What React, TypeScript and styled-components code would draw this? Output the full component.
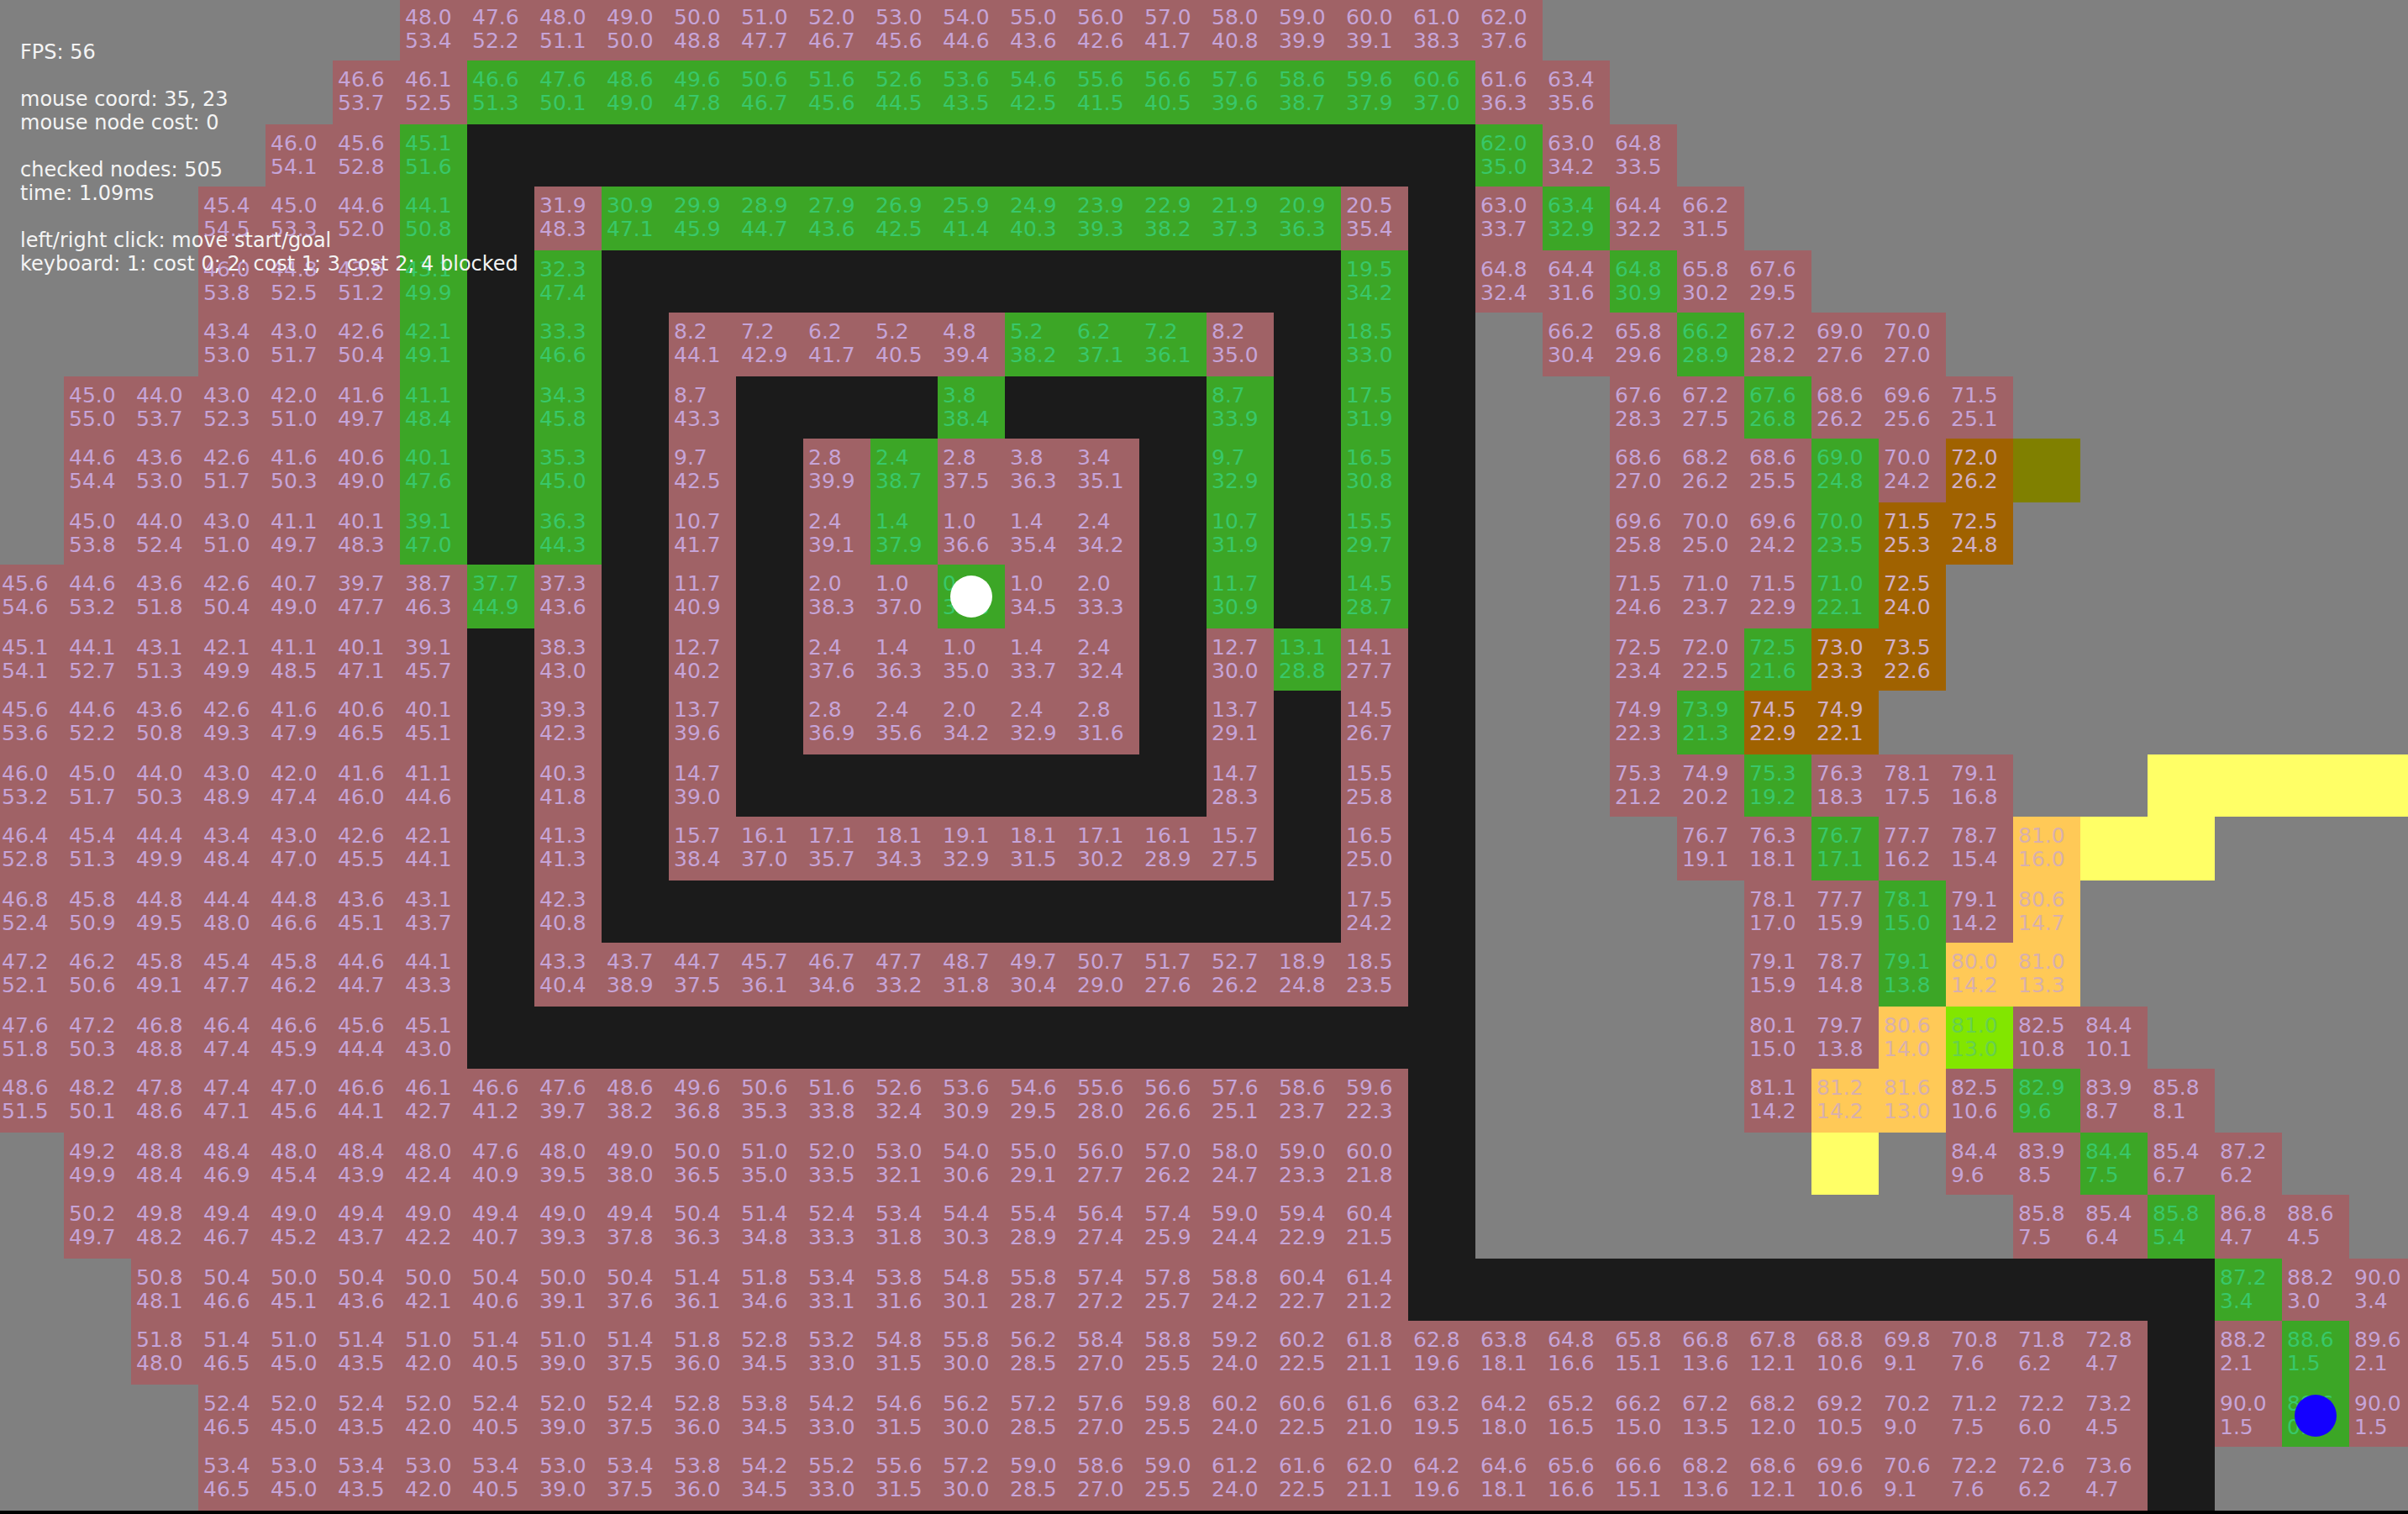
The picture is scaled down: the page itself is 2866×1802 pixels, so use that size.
import React from "react";
import styled, { createGlobalStyle } from "styled-components";

const GlobalStyle = createGlobalStyle`
  *, *::before, *::after { box-sizing: border-box; }
  body { margin: 0; background: #000; }
`;

type Kind = "empty" | "wall" | "checked" | "path" | "mud" | "amber" | "lime" | "yellow" | "olive";

const fills: Record<Kind, string> = {
  empty: "#808080",
  wall: "#1b1b1b",
  checked: "#a06266",
  path: "#3ca626",
  mud: "#a06200",
  amber: "#ffc957",
  lime: "#82e600",
  yellow: "#ffff66",
  olive: "#808000",
};

const inks: Partial<Record<Kind, string>> = {
  checked: "#c6a4d8",
  path: "#38c86a",
  mud: "#d0b0c8",
  amber: "#d8b0ac",
  lime: "#66d04e",
};

const codes: Record<string, Kind> = {
  ".": "empty",
  "#": "wall",
  p: "checked",
  g: "path",
  b: "mud",
  a: "amber",
  l: "lime",
  y: "yellow",
  o: "olive",
};

/* One line per map row. Segments are separated by "|": a code with a repeat
   count, or a code with the path costs, a slash and the heuristic costs. */
const map = [
  ". 6|p 48.0 47.6 48.0 49.0 50.0 51.0 52.0 53.0 54.0 55.0 56.0 57.0 58.0 59.0 60.0 61.0 62.0/53.4 52.2 51.1 50.0 48.8 47.7 46.7 45.6 44.6 43.6 42.6 41.7 40.8 39.9 39.1 38.3 37.6|. 13",
  ". 5|p 46.6 46.1/53.7 52.5|g 46.6 47.6 48.6 49.6 50.6 51.6 52.6 53.6 54.6 55.6 56.6 57.6 58.6 59.6 60.6/51.3 50.1 49.0 47.8 46.7 45.6 44.5 43.5 42.5 41.5 40.5 39.6 38.7 37.9 37.0|p 61.6 63.4/36.3 35.6|. 12",
  ". 4|p 46.0 45.6/54.1 52.8|g 45.1/51.6|# 15|g 62.0/35.0|p 63.0 64.8/34.2 33.5|. 11",
  ". 3|p 45.4 45.0 44.6/54.5 53.3 52.0|g 44.1/50.8|# 1|p 31.9/48.3|g 30.9 29.9 28.9 27.9 26.9 25.9 24.9 23.9 22.9 21.9 20.9/47.1 45.9 44.7 43.6 42.5 41.4 40.3 39.3 38.2 37.3 36.3|p 20.5/35.4|# 1|p 63.0/33.7|g 63.4/32.9|p 64.4 66.2/32.2 31.5|. 10",
  ". 3|p 46.0 44.8 43.6/53.8 52.5 51.2|g 43.1/49.9|# 1|g 32.3/47.4|# 11|g 19.5/34.2|# 1|p 64.8 64.4/32.4 31.6|g 64.8/30.9|p 65.8 67.6/30.2 29.5|. 9",
  ". 3|p 43.4 43.0 42.6/53.0 51.7 50.4|g 42.1/49.1|# 1|g 33.3/46.6|# 1|p 8.2 7.2 6.2 5.2 4.8/44.1 42.9 41.7 40.5 39.4|g 5.2 6.2 7.2/38.2 37.1 36.1|p 8.2/35.0|# 1|g 18.5/33.0|# 1|. 1|p 66.2 65.8/30.4 29.6|g 66.2/28.9|p 67.2 69.0 70.0/28.2 27.6 27.0|. 7",
  ". 1|p 45.0 44.0 43.0 42.0 41.6/55.0 53.7 52.3 51.0 49.7|g 41.1/48.4|# 1|g 34.3/45.8|# 1|p 8.7/43.3|# 3|g 3.8/38.4|# 3|g 8.7/33.9|# 1|g 17.5/31.9|# 1|. 2|p 67.6 67.2/28.3 27.5|g 67.6/26.8|p 68.6 69.6 71.5/26.2 25.6 25.1|. 6",
  ". 1|p 44.6 43.6 42.6 41.6 40.6/54.4 53.0 51.7 50.3 49.0|g 40.1/47.6|# 1|g 35.3/45.0|# 1|p 9.7/42.5|# 1|p 2.8/39.9|g 2.4/38.7|p 2.8 3.8 3.4/37.5 36.3 35.1|# 1|g 9.7/32.9|# 1|g 16.5/30.8|# 1|. 2|p 68.6 68.2 68.6/27.0 26.2 25.5|g 69.0/24.8|p 70.0/24.2|b 72.0/26.2|o 1|. 5",
  ". 1|p 45.0 44.0 43.0 41.1 40.1/53.8 52.4 51.0 49.7 48.3|g 39.1/47.0|# 1|g 36.3/44.3|# 1|p 10.7/41.7|# 1|p 2.4/39.1|g 1.4/37.9|p 1.0 1.4 2.4/36.6 35.4 34.2|# 1|g 10.7/31.9|# 1|g 15.5/29.7|# 1|. 2|p 69.6 70.0 69.6/25.8 25.0 24.2|g 70.0/23.5|b 71.5 72.5/25.3 24.8|. 6",
  "p 45.6 44.6 43.6 42.6 40.7 39.7 38.7/54.6 53.2 51.8 50.4 49.0 47.7 46.3|g 37.7/44.9|p 37.3/43.6|# 1|p 11.7/40.9|# 1|p 2.0 1.0/38.3 37.0|g 0.0/35.8|p 1.0 2.0/34.5 33.3|# 1|g 11.7/30.9|# 1|g 14.5/28.7|# 1|. 2|p 71.5 71.0 71.5/24.6 23.7 22.9|g 71.0/22.1|b 72.5/24.0|. 7",
  "p 45.1 44.1 43.1 42.1 41.1 40.1 39.1/54.1 52.7 51.3 49.9 48.5 47.1 45.7|# 1|p 38.3/43.0|# 1|p 12.7/40.2|# 1|p 2.4 1.4 1.0 1.4 2.4/37.6 36.3 35.0 33.7 32.4|# 1|p 12.7/30.0|g 13.1/28.8|p 14.1/27.7|# 1|. 2|p 72.5 72.0/23.4 22.5|g 72.5/21.6|b 73.0 73.5/23.3 22.6|. 7",
  "p 45.6 44.6 43.6 42.6 41.6 40.6 40.1/53.6 52.2 50.8 49.3 47.9 46.5 45.1|# 1|p 39.3/42.3|# 1|p 13.7/39.6|# 1|p 2.8 2.4 2.0 2.4 2.8/36.9 35.6 34.2 32.9 31.6|# 1|p 13.7/29.1|# 1|p 14.5/26.7|# 1|. 2|p 74.9/22.3|g 73.9/21.3|b 74.5 74.9/22.9 22.1|. 8",
  "p 46.0 45.0 44.0 43.0 42.0 41.6 41.1/53.2 51.7 50.3 48.9 47.4 46.0 44.6|# 1|p 40.3/41.8|# 1|p 14.7/39.0|# 7|p 14.7/28.3|# 1|p 15.5/25.8|# 1|. 2|p 75.3 74.9/21.2 20.2|g 75.3/19.2|p 76.3 78.1 79.1/18.3 17.5 16.8|. 2|y 4",
  "p 46.4 45.4 44.4 43.4 43.0 42.6 42.1/52.8 51.3 49.9 48.4 47.0 45.5 44.1|# 1|p 41.3/41.3|# 1|p 15.7 16.1 17.1 18.1 19.1 18.1 17.1 16.1 15.7/38.4 37.0 35.7 34.3 32.9 31.5 30.2 28.9 27.5|# 1|p 16.5/25.0|# 1|. 3|p 76.7 76.3/19.1 18.1|g 76.7/17.1|p 77.7 78.7/16.2 15.4|a 81.0/16.0|y 2|. 3",
  "p 46.8 45.8 44.8 44.4 44.8 43.6 43.1/52.4 50.9 49.5 48.0 46.6 45.1 43.7|# 1|p 42.3/40.8|# 11|p 17.5/24.2|# 1|. 4|p 78.1 77.7/17.0 15.9|g 78.1/15.0|p 79.1/14.2|a 80.6/14.7|. 5",
  "p 47.2 46.2 45.8 45.4 45.8 44.6 44.1/52.1 50.6 49.1 47.7 46.2 44.7 43.3|# 1|p 43.3 43.7 44.7 45.7 46.7 47.7 48.7 49.7 50.7 51.7 52.7 18.9 18.5/40.4 38.9 37.5 36.1 34.6 33.2 31.8 30.4 29.0 27.6 26.2 24.8 23.5|# 1|. 4|p 79.1 78.7/15.9 14.8|g 79.1/13.8|a 80.0 81.0/14.2 13.3|. 5",
  "p 47.6 47.2 46.8 46.4 46.6 45.6 45.1/51.8 50.3 48.8 47.4 45.9 44.4 43.0|# 15|. 4|p 80.1 79.7/15.0 13.8|a 80.6/14.0|l 81.0/13.0|p 82.5 84.4/10.8 10.1|. 4",
  "p 48.6 48.2 47.8 47.4 47.0 46.6 46.1 46.6 47.6 48.6 49.6 50.6 51.6 52.6 53.6 54.6 55.6 56.6 57.6 58.6 59.6/51.5 50.1 48.6 47.1 45.6 44.1 42.7 41.2 39.7 38.2 36.8 35.3 33.8 32.4 30.9 29.5 28.0 26.6 25.1 23.7 22.3|# 1|. 4|p 81.1/14.2|a 81.2 81.6/14.2 13.0|p 82.5/10.6|g 82.9/9.6|p 83.9 85.8/8.7 8.1|. 3",
  ". 1|p 49.2 48.8 48.4 48.0 48.4 48.0 47.6 48.0 49.0 50.0 51.0 52.0 53.0 54.0 55.0 56.0 57.0 58.0 59.0 60.0/49.9 48.4 46.9 45.4 43.9 42.4 40.9 39.5 38.0 36.5 35.0 33.5 32.1 30.6 29.1 27.7 26.2 24.7 23.3 21.8|# 1|. 5|y 1|. 1|p 84.4 83.9/9.6 8.5|g 84.4/7.5|p 85.4 87.2/6.7 6.2|. 2",
  ". 1|p 50.2 49.8 49.4 49.0 49.4 49.0 49.4 49.0 49.4 50.4 51.4 52.4 53.4 54.4 55.4 56.4 57.4 59.0 59.4 60.4/49.7 48.2 46.7 45.2 43.7 42.2 40.7 39.3 37.8 36.3 34.8 33.3 31.8 30.3 28.9 27.4 25.9 24.4 22.9 21.5|# 1|. 8|p 85.8 85.4/7.5 6.4|g 85.8/5.4|p 86.8 88.6/4.7 4.5|. 1",
  ". 2|p 50.8 50.4 50.0 50.4 50.0 50.4 50.0 50.4 51.4 51.8 53.4 53.8 54.8 55.8 57.4 57.8 58.8 60.4 61.4/48.1 46.6 45.1 43.6 42.1 40.6 39.1 37.6 36.1 34.6 33.1 31.6 30.1 28.7 27.2 25.7 24.2 22.7 21.2|# 12|g 87.2/3.4|p 88.2 90.0/3.0 3.4",
  ". 2|p 51.8 51.4 51.0 51.4 51.0 51.4 51.0 51.4 51.8 52.8 53.2 54.8 55.8 56.2 58.4 58.8 59.2 60.2 61.8 62.8 63.8 64.8 65.8 66.8 67.8 68.8 69.8 70.8 71.8 72.8/48.0 46.5 45.0 43.5 42.0 40.5 39.0 37.5 36.0 34.5 33.0 31.5 30.0 28.5 27.0 25.5 24.0 22.5 21.1 19.6 18.1 16.6 15.1 13.6 12.1 10.6 9.1 7.6 6.2 4.7|# 1|p 88.2/2.1|g 88.6/1.5|p 89.6/2.1",
  ". 3|p 52.4 52.0 52.4 52.0 52.4 52.0 52.4 52.8 53.8 54.2 54.6 56.2 57.2 57.6 59.8 60.2 60.6 61.6 63.2 64.2 65.2 66.2 67.2 68.2 69.2 70.2 71.2 72.2 73.2/46.5 45.0 43.5 42.0 40.5 39.0 37.5 36.0 34.5 33.0 31.5 30.0 28.5 27.0 25.5 24.0 22.5 21.0 19.5 18.0 16.5 15.0 13.5 12.0 10.5 9.0 7.5 6.0 4.5|# 1|p 90.0/1.5|g 89.6/0.0|p 90.0/1.5",
  ". 3|p 53.4 53.0 53.4 53.0 53.4 53.0 53.4 53.8 54.2 55.2 55.6 57.2 59.0 58.6 59.0 61.2 61.6 62.0 64.2 64.6 65.6 66.6 68.2 68.6 69.6 70.6 72.2 72.6 73.6/46.5 45.0 43.5 42.0 40.5 39.0 37.5 36.0 34.5 33.0 31.5 30.0 28.5 27.0 25.5 24.0 22.5 21.1 19.6 18.1 16.6 15.1 13.6 12.1 10.6 9.1 7.6 6.2 4.7|# 1|. 3",
];

interface Node {
  kind: Kind;
  cost?: string;
  heuristic?: string;
}

const parseRow = (row: string): Node[] =>
  row.split("|").flatMap((segment): Node[] => {
    const kind = codes[segment[0]];
    const [first, second] = segment.slice(2).split("/");
    if (second === undefined) {
      return Array.from({ length: Number(first) }, () => ({ kind }));
    }
    const heuristics = second.split(" ");
    return first.split(" ").map((cost, i) => ({ kind, cost, heuristic: heuristics[i] }));
  });

const rows = map.map(parseRow);
const columns = 36;
const start = { column: 14, row: 9 };
const goal = { column: 34, row: 22 };

const Viewport = styled.main`
  position: relative;
  height: 100vh;
  overflow: hidden;
  background: #808080;
  border-bottom: 4px solid #000;
  font-family: "DejaVu Sans", Verdana, sans-serif;
  line-height: 28px;
  white-space: nowrap;
`;

const Board = styled.div`
  display: grid;
  grid-template-columns: repeat(${columns}, 80px);
  grid-template-rows: repeat(12, 74px 76px);
  margin: -2px 0 0 -4px;
  font-size: 25px;
`;

const Tile = styled.div<{ $kind: Kind }>`
  position: relative;
  padding: 9px 0 0 6px;
  background: ${(p) => fills[p.$kind]};
  color: ${(p) => inks[p.$kind] ?? "inherit"};
`;

const Value = styled.span`
  display: block;
`;

const Marker = styled.span<{ $color: string }>`
  position: absolute;
  inset: 0;
  width: 50px;
  height: 50px;
  margin: auto;
  border-radius: 50%;
  background: ${(p) => p.$color};
`;

const Stats = styled.aside`
  position: absolute;
  top: 48px;
  left: 24px;
  display: flex;
  flex-direction: column;
  gap: 28px;
  font-size: 24px;
  color: #f4f4f4;
`;

const StatGroup = styled.div`
  display: flex;
  flex-direction: column;
`;

const stats = [
  ["FPS: 56"],
  ["mouse coord: 35, 23", "mouse node cost: 0"],
  ["checked nodes: 505", "time: 1.09ms"],
  ["left/right click: move start/goal", "keyboard: 1: cost 0; 2: cost 1; 3 cost 2; 4 blocked"],
];

export default function App() {
  return (
    <>
      <GlobalStyle />
      <Viewport>
        <Board>
          {rows.map((nodes, row) =>
            nodes.map((node, column) => (
              <Tile key={`${column}-${row}`} $kind={node.kind}>
                {node.cost && <Value>{node.cost}</Value>}
                {node.heuristic && <Value>{node.heuristic}</Value>}
                {column === start.column && row === start.row && <Marker $color="#ffffff" />}
                {column === goal.column && row === goal.row && <Marker $color="#1400ff" />}
              </Tile>
            )),
          )}
        </Board>
        <Stats>
          {stats.map((lines) => (
            <StatGroup key={lines[0]}>
              {lines.map((line) => (
                <span key={line}>{line}</span>
              ))}
            </StatGroup>
          ))}
        </Stats>
      </Viewport>
    </>
  );
}
